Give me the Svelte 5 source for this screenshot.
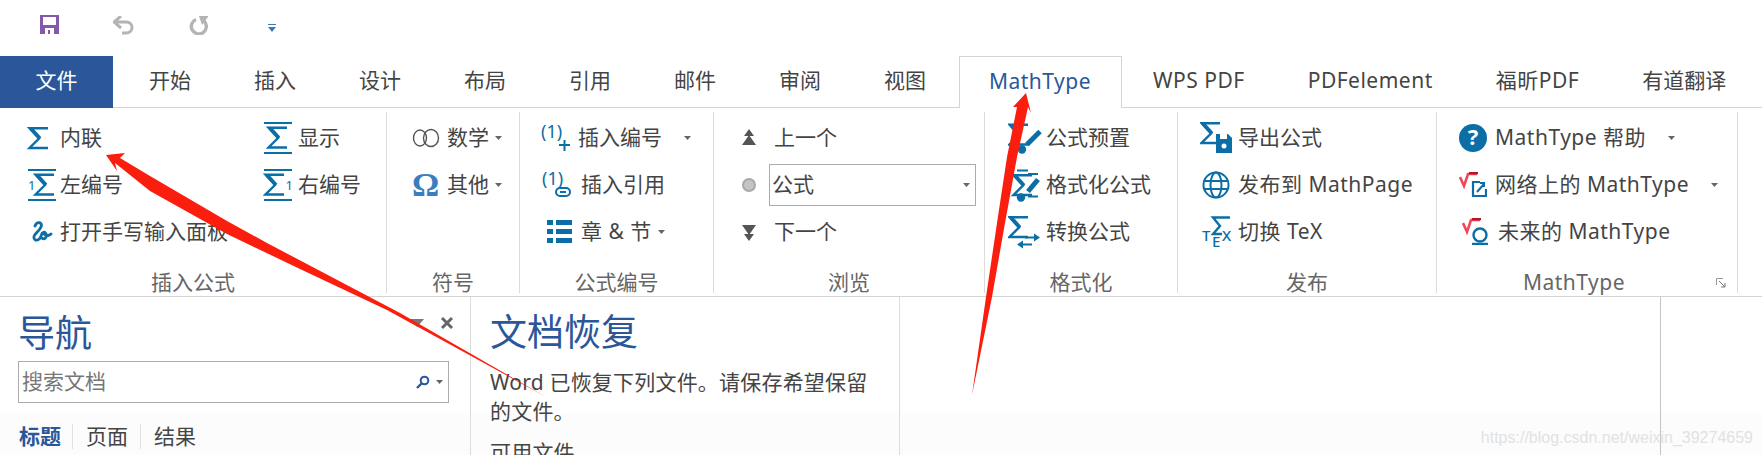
<script>
  const tabs = ["开始", "插入", "设计", "布局", "引用", "邮件", "审阅", "视图"];
  const tabsAfter = ["WPS PDF", "PDFelement", "福昕PDF", "有道翻译"];
</script>

{#snippet sigma(x = 0, y = 0)}
  <path d="M{x + 20} {y + 1.2}H{x + 1.5}L{x + 11} {y + 11.5}L{x + 1.5} {y + 21}H{x + 20}" fill="none" stroke="#0b6ea6" stroke-width="2.4" />
  <path d="M{x + 3} {y + 1.5}L{x + 12} {y + 11.5}" fill="none" stroke="#0b6ea6" stroke-width="3.6" />
{/snippet}

{#snippet caret()}
  <svg class="caret" width="7" height="4" viewBox="0 0 7 4"><path d="M0 0H7L3.5 4Z" fill="#666" /></svg>
{/snippet}

<div class="word">
  <div class="qat">
    <svg class="save" width="19" height="19" viewBox="0 0 19 19">
      <path d="M0 0H19V19H0Z" fill="#8459a8" />
      <path d="M3 2H16V10H3Z" fill="#fff" />
      <path d="M5 13H14V19H5Z" fill="#fff" />
      <path d="M8 15H10V19H8Z" fill="#8459a8" />
    </svg>
    <svg class="undo" width="21" height="19" viewBox="0 0 21 19">
      <path d="M2 6H13C21 6 21 17 13 17H9" fill="none" stroke="#b4b4b4" stroke-width="3" />
      <path d="M8 0L1 6L8 12" fill="none" stroke="#b4b4b4" stroke-width="3" />
    </svg>
    <svg class="redo" width="20" height="19" viewBox="0 0 20 19">
      <path d="M8 3.500A7.500 7.500 0 1 0 16 5" fill="none" stroke="#b4b4b4" stroke-width="3.400" />
      <path d="M11 0H20V1L14 9Z" fill="#b4b4b4" />
    </svg>
    <svg class="more" width="8" height="8" viewBox="0 0 8 8">
      <path d="M0 0.500H8" stroke="#3f78b5" />
      <path d="M0 3H8L4 8Z" fill="#3f78b5" />
    </svg>
  </div>

  <div class="tabs">
    <div class="tab file">文件</div>
    {#each tabs as t}
      <div class="tab">{t}</div>
    {/each}
    <div class="tab active en">MathType</div>
    {#each tabsAfter as t}
      <div class="tab" class:en={/[A-Z]/.test(t)}>{t}</div>
    {/each}
  </div>

  <div class="ribbon">
    <section class="group g1">
      <div class="rows two">
        <div class="item">
          <span class="ico w36 left nudge">
            <svg width="24" height="24" viewBox="0 0 24 24">{@render sigma(2, 1)}</svg>
          </span>内联
        </div>
        <div class="item">
          <span class="ico w40">
            <svg width="30" height="32" viewBox="0 0 30 32">
              <path d="M1 1H29M1 31H29" stroke="#0b6ea6" stroke-width="2" />
              {@render sigma(4, 4.5)}
            </svg>
          </span>显示
        </div>
        <div class="item">
          <span class="ico w36">
            <svg width="30" height="32" viewBox="0 0 30 32">
              <path d="M1 1H29M1 31H29" stroke="#0b6ea6" stroke-width="2" />
              {@render sigma(7, 4.5)}
              <text x="1" y="21" class="num">1</text>
            </svg>
          </span>左编号
        </div>
        <div class="item">
          <span class="ico w40">
            <svg width="30" height="32" viewBox="0 0 30 32">
              <path d="M1 1H29M1 31H29" stroke="#0b6ea6" stroke-width="2" />
              {@render sigma(1, 4.5)}
              <text x="22.500" y="21" class="num">1</text>
            </svg>
          </span>右编号
        </div>
        <div class="item wide">
          <span class="ico w36">
            <svg width="22" height="22" viewBox="0 0 22 22">
              <path d="M4 5C6 0 12 1 10 6C8 11 2 13 3 17C4 21 9 19 10 15C11 11 14 10 15 13C16 17 13 19 11 17M13 13C15 15 18 15 20 13" fill="none" stroke="#0b6ea6" stroke-width="2.800" stroke-linecap="round" />
            </svg>
          </span>打开手写输入面板
        </div>
      </div>
      <div class="label">插入公式</div>
    </section>

    <section class="group g2">
      <div class="rows">
        <div class="item">
          <span class="ico w35 left">
            <svg width="28" height="20" viewBox="0 0 28 20">
              <ellipse cx="8" cy="10" rx="6.500" ry="8" fill="none" stroke="#555" stroke-width="1.400" />
              <ellipse cx="19" cy="10" rx="7.500" ry="8.500" fill="none" stroke="#555" stroke-width="1.400" />
            </svg>
          </span>数学{@render caret()}
        </div>
        <div class="item">
          <span class="ico w35 left omega">Ω</span>其他{@render caret()}
        </div>
      </div>
      <div class="label">符号</div>
    </section>

    <section class="group g3">
      <div class="rows">
        <div class="item">
          <span class="ico w37 left">
            <svg width="30" height="30" viewBox="0 0 30 30">
              <text x="0" y="15" class="eq">(1)</text>
              <path d="M18 22H29M23.500 17V28" stroke="#0b6ea6" stroke-width="2" />
            </svg>
          </span>插入编号<span class="gap-caret">{@render caret()}</span>
        </div>
        <div class="item">
          <span class="ico w40 left">
            <svg width="32" height="30" viewBox="0 0 32 30">
              <text x="1" y="15" class="eq">(1)</text>
              <rect x="15" y="18" width="14" height="8" rx="4" fill="none" stroke="#0b6ea6" stroke-width="2" />
              <path d="M19 22H25" stroke="#0b6ea6" stroke-width="2" />
            </svg>
          </span>插入引用
        </div>
        <div class="item">
          <span class="ico w40 indent">
            <svg width="25" height="23" viewBox="0 0 25 23">
              <path d="M0 0H6V5H0ZM0 9H6V14H0ZM0 18H6V23H0ZM9 0H25V5H9ZM9 9H25V14H9ZM9 18H25V23H9Z" fill="#0b6ea6" />
            </svg>
          </span><span class="en">章 & 节</span>{@render caret()}
        </div>
      </div>
      <div class="label">公式编号</div>
    </section>

    <section class="group g4">
      <div class="rows">
        <div class="item">
          <span class="ico w32 left">
            <svg width="14" height="18" viewBox="0 0 14 18">
              <path d="M7 0L12 7H2ZM7 6L14 16H0Z" fill="#555" />
            </svg>
          </span>上一个
        </div>
        <div class="item">
          <span class="ico w27 left">
            <svg width="14" height="14" viewBox="0 0 14 14">
              <circle cx="7" cy="7" r="6" fill="#c4c4c4" stroke="#a8a8a8" stroke-width="2" />
            </svg>
          </span>
          <div class="combo">公式{@render caret()}</div>
        </div>
        <div class="item">
          <span class="ico w32 left">
            <svg width="14" height="18" viewBox="0 0 14 18">
              <path d="M0 2H14L7 12ZM2 11H12L7 18Z" fill="#555" />
            </svg>
          </span>下一个
        </div>
      </div>
      <div class="label">浏览</div>
    </section>

    <section class="group g5">
      <div class="rows">
        <div class="item">
          <span class="ico w38 left">
            <svg width="34" height="34" viewBox="0 0 34 34">
              {@render sigma(0, 2.5)}
              <path d="M32 10.500L19 23.500" stroke="#0b6ea6" stroke-width="5" />
              <circle cx="14" cy="28.500" r="4.200" fill="#0b6ea6" />
            </svg>
          </span>公式预置
        </div>
        <div class="item">
          <span class="ico w38 left">
            <svg width="34" height="34" viewBox="0 0 34 34">
              <path d="M9 2.500H20M20 6H30M20 28.500H30" stroke="#0b6ea6" stroke-width="2" />
              {@render sigma(4, 6)}
              <path d="M30 11.500L20 23.500" stroke="#0b6ea6" stroke-width="5" />
              <circle cx="13" cy="29.500" r="4.200" fill="#0b6ea6" />
            </svg>
          </span>格式化公式
        </div>
        <div class="item">
          <span class="ico w38 left">
            <svg width="34" height="34" viewBox="0 0 34 34">
              {@render sigma(0, 1)}
              <path d="M17 22.500H27" stroke="#0b6ea6" stroke-width="2" />
              <path d="M26 18.500L32 22.500L26 26.500Z" fill="#0b6ea6" />
              <path d="M14 29.500H24" stroke="#0b6ea6" stroke-width="2" />
              <path d="M15 25.500L9 29.500L15 33.500Z" fill="#0b6ea6" />
            </svg>
          </span>转换公式
        </div>
      </div>
      <div class="label">格式化</div>
    </section>

    <section class="group g6">
      <div class="rows">
        <div class="item">
          <span class="ico w38 left">
            <svg width="32" height="32" viewBox="0 0 32 32">
              {@render sigma(0, 0)}
              <path d="M16 12H28L32 16V31H16Z" fill="#0b6ea6" />
              <path d="M20 12H27V17H20Z" fill="#fff" />
              <circle cx="24" cy="24" r="2.500" fill="#fff" />
            </svg>
          </span>导出公式
        </div>
        <div class="item">
          <span class="ico w38 left shift">
            <svg width="28" height="28" viewBox="0 0 28 28">
              <g fill="none" stroke="#0b6ea6" stroke-width="2">
                <circle cx="14" cy="14" r="12.500" />
                <ellipse cx="14" cy="14" rx="5.500" ry="12.500" />
                <path d="M2 10H26M2 18H26" />
              </g>
            </svg>
          </span><span class="en">发布到 MathPage</span>
        </div>
        <div class="item">
          <span class="ico w38 left shift">
            <svg width="30" height="32" viewBox="0 0 30 32">
              <path d="M28 1.500H11L18 10L11 18H20" fill="none" stroke="#0b6ea6" stroke-width="2.400" />
              <text x="0" y="25" class="tex">T</text>
              <text x="10" y="31" class="tex">E</text>
              <text x="20" y="25" class="tex">X</text>
            </svg>
          </span><span class="en">切换 TeX</span>
        </div>
      </div>
      <div class="label">发布</div>
    </section>

    <section class="group g7">
      <div class="rows">
        <div class="item">
          <span class="ico w36 left">
            <svg width="28" height="28" viewBox="0 0 28 28">
              <circle cx="14" cy="14" r="14" fill="#0b6ea6" />
              <text x="14" y="21" class="help">?</text>
            </svg>
          </span><span class="en">MathType 帮助</span><span class="gap-caret">{@render caret()}</span>
        </div>
        <div class="item">
          <span class="ico w36 left">
            <svg width="28" height="26" viewBox="0 0 28 26">
              <path d="M1 5L5 14L9 2H18" fill="none" stroke="#f04858" stroke-width="2.600" />
              <path d="M10 1H19" stroke="#b8142c" stroke-width="2.600" />
              <path d="M21 10H14V24H27V17" fill="none" stroke="#0b6ea6" stroke-width="2.200" />
              <path d="M18 20L25 12M21 11H25V15" fill="none" stroke="#0b6ea6" stroke-width="2" />
            </svg>
          </span><span class="en">网络上的 MathType</span><span class="gap-caret">{@render caret()}</span>
        </div>
        <div class="item">
          <span class="ico w39 left pad3">
            <svg width="28" height="27" viewBox="0 0 28 27">
              <path d="M1 5L5 14L9 2H18" fill="none" stroke="#f04858" stroke-width="2.600" />
              <path d="M10 1H19" stroke="#b8142c" stroke-width="2.600" />
              <circle cx="18" cy="17" r="6.500" fill="none" stroke="#0b6ea6" stroke-width="2.400" />
              <path d="M10 26H26" stroke="#0b6ea6" stroke-width="2.400" />
            </svg>
          </span><span class="en">未来的 MathType</span>
        </div>
      </div>
      <div class="label en">MathType</div>
      <svg class="launcher" width="10" height="10" viewBox="0 0 10 10">
        <path d="M0.500 7V0.500H7" fill="none" stroke="#999" />
        <path d="M3 3L9 9M5 9H9V5" fill="none" stroke="#777" />
      </svg>
    </section>
  </div>

  <div class="panes">
    <aside class="nav">
      <div class="nav-head">
        <div class="nav-title">导航</div>
        <svg class="tri" width="14" height="8" viewBox="0 0 14 8"><path d="M0 0H14L7 8Z" fill="#777" /></svg>
        <svg class="close" width="14" height="14" viewBox="0 0 14 14"><path d="M2 2L12 12M12 2L2 12" stroke="#666" stroke-width="3" /></svg>
      </div>
      <div class="search">
        <span class="ph">搜索文档</span>
        <svg width="14" height="14" viewBox="0 0 14 14">
          <circle cx="8.500" cy="5.500" r="3.800" fill="none" stroke="#2b579a" stroke-width="2" />
          <path d="M6 8L1 13" stroke="#2b579a" stroke-width="2.400" />
        </svg>
        {@render caret()}
      </div>
      <div class="nav-tabs">
        <span class="cur">标题</span>
        <span>页面</span>
        <span>结果</span>
      </div>
    </aside>
    <div class="recover">
      <div class="rec-title">文档恢复</div>
      <p>Word 已恢复下列文件。请保存希望保留的文件。</p>
      <p class="avail">可用文件</p>
    </div>
    <div class="page"></div>
    <div class="scroll">
      <span class="mark">https://blog.csdn.net/weixin_39274659</span>
    </div>
  </div>

  <svg class="arrows" width="1762" height="455" viewBox="0 0 1762 455">
    <path d="M106 155L125 153L120 158L150 176L227 221L267 243L400 313L546 397L387 310L300 269L227 234L150 191L115 163L117 171Z" fill="#fb1d0e" />
    <path d="M1026 93L1031 113L1028 107L1017 157L1005 223L992 297L972 395L986 297L997 223L1007 157L1017 107L1013 107Z" fill="#fb1d0e" />
  </svg>
</div>

<style>
  :global(body) {
    background: #fff;
  }
  .word {
    position: relative;
    width: 1762px;
    height: 455px;
    overflow: hidden;
    background: #fff;
    color: #444;
    font-family: "Noto Sans", "Noto Sans CJK SC", sans-serif;
    font-size: 21px;
    line-height: 1.2;
  }
  .en {
    letter-spacing: 0.5px;
  }
  .qat {
    height: 56px;
    display: flex;
    align-items: flex-start;
    box-sizing: border-box;
    padding-top: 15px;
    padding-left: 40px;
  }
  .undo {
    margin-left: 54px;
    margin-top: 1px;
  }
  .redo {
    margin-left: 54px;
    margin-top: 1px;
  }
  .more {
    margin-left: 60px;
    margin-top: 9px;
  }
  .tabs {
    display: flex;
    height: 52px;
    box-sizing: border-box;
    border-bottom: 1px solid #d4d4d4;
  }
  .tab {
    padding: 0 31.5px 2px;
    height: 52px;
    box-sizing: border-box;
    display: flex;
    align-items: center;
    white-space: nowrap;
  }
  .file {
    width: 113px;
    padding: 0 0 2px;
    justify-content: center;
    margin-right: 4.5px;
    background: #2b579a;
    color: #fff;
  }
  .active {
    margin-left: 1px;
    width: 163px;
    padding: 0 0 2px;
    justify-content: center;
    color: #2b579a;
    background: #fff;
    border: 1px solid #d4d4d4;
    border-bottom: 0;
  }
  .ribbon {
    display: flex;
    height: 189px;
    box-sizing: border-box;
    padding-top: 4px;
    border-bottom: 1px solid #d4d4d4;
  }
  .group {
    position: relative;
    height: 181px;
    box-sizing: border-box;
    display: flex;
    flex-direction: column;
    border-right: 1px solid #dcdcdc;
    padding-top: 2px;
  }
  .g1 { width: 387px; padding-left: 24px; }
  .g2 { width: 133px; padding-left: 25px; }
  .g3 { width: 194px; padding-left: 21px; }
  .g4 { width: 271px; padding-left: 28px; }
  .g5 { width: 193px; padding-left: 23px; }
  .g6 { width: 259px; padding-left: 22px; }
  .g7 { width: 301px; padding-left: 22px; }
  .rows {
    flex: 1;
  }
  .two {
    display: grid;
    grid-template-columns: 234px 1fr;
    grid-auto-rows: 47px;
  }
  .wide {
    grid-column: 1 / 3;
  }
  .item {
    height: 47px;
    display: flex;
    align-items: center;
    white-space: nowrap;
  }
  .ico {
    flex: none;
    display: flex;
    align-items: center;
    justify-content: center;
  }
  .left {
    justify-content: flex-start;
  }
  .nudge {
    padding-left: 2px;
    box-sizing: border-box;
  }
  .shift {
    padding-left: 2px;
    box-sizing: border-box;
  }
  .indent {
    justify-content: flex-start;
    padding-left: 6px;
    box-sizing: border-box;
  }
  .pad3 {
    padding-left: 3px;
    box-sizing: border-box;
  }
  .w27 { width: 27px; }
  .w32 { width: 32px; }
  .w35 { width: 35px; }
  .w36 { width: 36px; }
  .w37 { width: 37px; }
  .w38 { width: 38px; }
  .w39 { width: 39px; }
  .w40 { width: 40px; }
  .omega {
    font-family: "Liberation Serif", serif;
    font-weight: 700;
    font-size: 34px;
    color: #3a7ebf;
    line-height: 1;
  }
  .caret {
    flex: none;
    margin-left: 6px;
  }
  .gap-caret {
    display: flex;
    margin-left: 16px;
  }
  .num {
    font-size: 13px;
    fill: #0b6ea6;
  }
  .eq {
    font-size: 18px;
    fill: #0b6ea6;
  }
  .tex {
    font-size: 15px;
    font-weight: 500;
    fill: #0b6ea6;
  }
  .help {
    font-size: 22px;
    font-weight: 700;
    fill: #fff;
    text-anchor: middle;
  }
  .combo {
    width: 207px;
    height: 42px;
    box-sizing: border-box;
    display: flex;
    align-items: center;
    justify-content: space-between;
    padding: 0 5px 0 2px;
    border: 1px solid #ababab;
  }
  .label {
    height: 22px;
    line-height: 22px;
    text-align: center;
    color: #666;
  }
  .g1 .label { margin-left: -24px; }
  .g2 .label { margin-left: -25px; }
  .g3 .label { margin-left: -21px; }
  .g4 .label { margin-left: -28px; }
  .g5 .label { margin-left: -23px; }
  .g6 .label { margin-left: -22px; }
  .g7 .label { margin-left: -22px; padding-right: 26px; }
  .launcher {
    position: absolute;
    right: 11px;
    bottom: 5px;
  }
  .panes {
    display: flex;
    height: 158px;
    overflow: hidden;
    background: linear-gradient(#fff 116px, #fcfcfc 116px);
  }
  .nav {
    width: 471px;
    flex: none;
    box-sizing: border-box;
    padding: 0 21px 0 18px;
    border-right: 1px solid #dcdcdc;
  }
  .nav-head {
    display: flex;
    align-items: center;
    height: 64px;
  }
  .nav-title {
    flex: 1;
    font-size: 37px;
    color: #2b579a;
    line-height: 1;
    padding-top: 6px;
  }
  .tri {
    margin-bottom: 12px;
  }
  .close {
    margin-left: 16px;
    margin-right: -5px;
    margin-bottom: 12px;
  }
  .search {
    height: 42px;
    box-sizing: border-box;
    border: 1px solid #ababab;
    display: flex;
    align-items: center;
    padding: 0 5px 0 3px;
  }
  .ph {
    flex: 1;
    color: #777;
  }
  .nav-tabs {
    display: flex;
    margin-top: 18px;
    height: 31px;
    align-items: center;
  }
  .nav-tabs span {
    padding: 0 12px 0 13px;
    border-left: 1px solid #e0e0e0;
  }
  .nav-tabs .cur {
    padding: 0 11px 0 1px;
    border-left: 0;
    font-weight: 700;
    color: #2b579a;
  }
  .recover {
    width: 429px;
    flex: none;
    box-sizing: border-box;
    padding: 0 30px 0 19px;
    border-right: 1px solid #dcdcdc;
  }
  .rec-title {
    font-size: 37px;
    color: #2b579a;
    height: 64px;
    display: flex;
    align-items: center;
    padding-top: 6px;
    box-sizing: border-box;
  }
  .recover p {
    margin: 7px 0 0;
    line-height: 29px;
    letter-spacing: 0.2px;
  }
  .recover .avail {
    margin-top: 12px;
  }
  .page {
    flex: 1;
    border-right: 1px solid #c4c4c4;
  }
  .scroll {
    width: 101px;
    flex: none;
    position: relative;
  }
  .mark {
    position: absolute;
    right: 9px;
    bottom: 8px;
    font-family: "Liberation Sans", sans-serif;
    font-size: 16px;
    color: #e2e2e2;
    white-space: nowrap;
  }
  .arrows {
    position: absolute;
    left: 0;
    top: 0;
    pointer-events: none;
  }
</style>
